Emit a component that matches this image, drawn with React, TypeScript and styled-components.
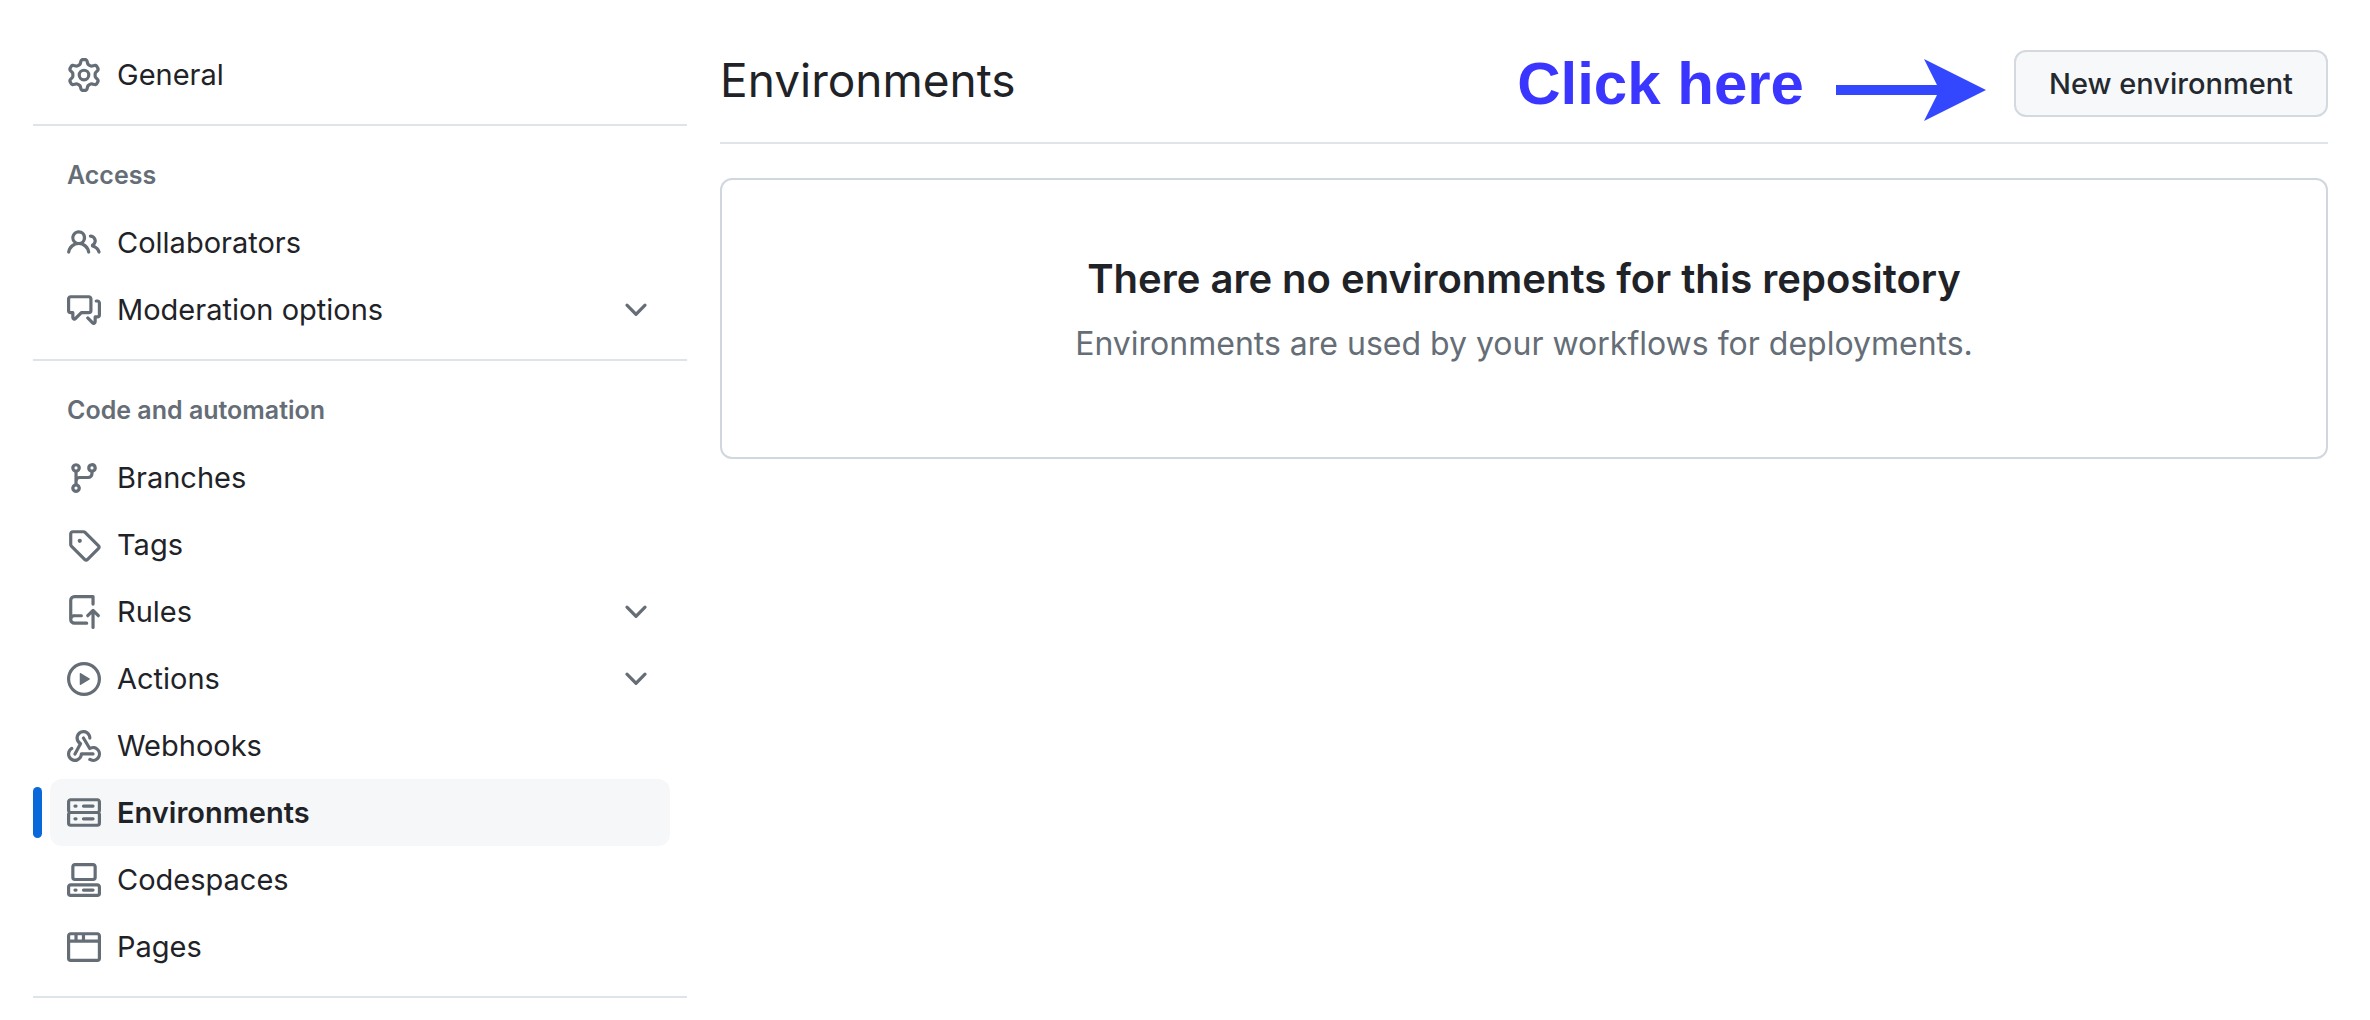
import React from "react";
import styled, { createGlobalStyle } from "styled-components";

const GlobalStyle = createGlobalStyle`
  *, *::before, *::after { box-sizing: border-box; }
  body {
    margin: 0;
    background: #ffffff;
    color: #1f2328;
    font-family: Inter, "Liberation Sans", sans-serif;
  }
`;

const paths = {
  gear: "M8 0a8.2 8.2 0 0 1 .701.031C9.444.095 9.99.645 10.16 1.29l.288 1.107c.018.066.079.158.212.224.231.114.454.243.668.386.123.082.233.09.299.071l1.103-.303c.644-.176 1.392.021 1.82.63.27.385.506.792.704 1.218.315.675.111 1.422-.364 1.891l-.814.806c-.049.048-.098.147-.088.294.016.257.016.515 0 .772-.01.147.038.246.088.294l.814.806c.475.469.679 1.216.364 1.891a7.977 7.977 0 0 1-.704 1.217c-.428.61-1.176.807-1.82.63l-1.102-.302c-.067-.019-.177-.011-.3.071a5.909 5.909 0 0 1-.668.386c-.133.066-.194.158-.211.224l-.29 1.106c-.168.646-.715 1.196-1.458 1.26a8.006 8.006 0 0 1-1.402 0c-.743-.064-1.289-.614-1.458-1.26l-.289-1.106c-.018-.066-.079-.158-.212-.224a5.738 5.738 0 0 1-.668-.386c-.123-.082-.233-.09-.299-.071l-1.103.303c-.644.176-1.392-.021-1.82-.63a8.12 8.12 0 0 1-.704-1.218c-.315-.675-.111-1.422.363-1.891l.815-.806c.05-.048.098-.147.088-.294a6.214 6.214 0 0 1 0-.772c.01-.147-.038-.246-.088-.294l-.815-.806C.635 6.045.431 5.298.746 4.623a7.92 7.92 0 0 1 .704-1.217c.428-.61 1.176-.807 1.82-.63l1.102.302c.067.019.177.011.3-.071.214-.143.437-.272.668-.386.133-.066.194-.158.211-.224l.29-1.106C6.009.645 6.556.095 7.299.03 7.53.01 7.764 0 8 0Zm-.571 1.525c-.036.003-.108.036-.137.146l-.289 1.105c-.147.561-.549.967-.998 1.189-.173.086-.34.183-.5.29-.417.278-.97.423-1.529.27l-1.103-.303c-.109-.03-.175.016-.195.045-.22.312-.412.644-.573.99-.014.031-.021.11.059.19l.815.806c.411.406.562.957.53 1.456a4.709 4.709 0 0 0 0 .582c.032.499-.119 1.05-.53 1.456l-.815.806c-.081.08-.073.159-.059.19.162.346.353.677.573.989.02.03.085.076.195.046l1.102-.303c.56-.153 1.113-.008 1.53.27.161.107.328.204.501.29.447.222.85.629.997 1.189l.289 1.105c.029.109.101.143.137.146a6.6 6.6 0 0 0 1.142 0c.036-.003.108-.036.137-.146l.289-1.105c.147-.561.549-.967.998-1.189.173-.086.34-.183.5-.29.417-.278.97-.423 1.529-.27l1.103.303c.109.029.175-.016.195-.045.22-.313.411-.644.573-.99.014-.031.021-.11-.059-.19l-.815-.806c-.411-.406-.562-.957-.53-1.456a4.709 4.709 0 0 0 0-.582c-.032-.499.119-1.05.53-1.456l.815-.806c.081-.08.073-.159.059-.19a6.464 6.464 0 0 0-.573-.989c-.02-.03-.085-.076-.195-.046l-1.102.303c-.56.153-1.113.008-1.53-.27a4.44 4.44 0 0 0-.501-.29c-.447-.222-.85-.629-.997-1.189l-.289-1.105c-.029-.11-.101-.143-.137-.146a6.6 6.6 0 0 0-1.142 0ZM11 8a3 3 0 1 1-6 0 3 3 0 0 1 6 0ZM9.5 8a1.5 1.5 0 1 0-3.001.001A1.5 1.5 0 0 0 9.5 8Z",
  people: "M2 5.5a3.5 3.5 0 1 1 5.898 2.549 5.508 5.508 0 0 1 3.034 4.084.75.75 0 1 1-1.482.235 4 4 0 0 0-7.9 0 .75.75 0 0 1-1.482-.236A5.507 5.507 0 0 1 3.102 8.05 3.493 3.493 0 0 1 2 5.5ZM11 4a3.001 3.001 0 0 1 2.22 5.018 5.01 5.01 0 0 1 2.56 3.012.749.749 0 0 1-.885.954.752.752 0 0 1-.549-.514 3.507 3.507 0 0 0-2.522-2.372.75.75 0 0 1-.574-.73v-.352a.75.75 0 0 1 .416-.672A1.5 1.5 0 0 0 11 5.5.75.75 0 0 1 11 4Zm-5.5-.5a2 2 0 1 0-.001 3.999A2 2 0 0 0 5.5 3.5Z",
  discussion: "M1.75 1h8.5c.966 0 1.75.784 1.75 1.75v5.5A1.75 1.75 0 0 1 10.25 10H7.061l-2.574 2.573A1.458 1.458 0 0 1 2 11.543V10h-.25A1.75 1.75 0 0 1 0 8.25v-5.5C0 1.784.784 1 1.75 1ZM1.5 2.75v5.5c0 .138.112.25.25.25h1a.75.75 0 0 1 .75.75v2.19l2.72-2.72a.749.749 0 0 1 .53-.22h3.5a.25.25 0 0 0 .25-.25v-5.5a.25.25 0 0 0-.25-.25h-8.5a.25.25 0 0 0-.25.25Zm13 2a.25.25 0 0 0-.25-.25h-.5a.75.75 0 0 1 0-1.5h.5c.966 0 1.75.784 1.75 1.75v5.5A1.75 1.75 0 0 1 14.25 12H14v1.543a1.458 1.458 0 0 1-2.487 1.03L9.22 12.28a.749.749 0 0 1 .326-1.275.749.749 0 0 1 .734.215l2.22 2.22v-2.19a.75.75 0 0 1 .75-.75h1a.25.25 0 0 0 .25-.25Z",
  branch: "M9.5 3.25a2.25 2.25 0 1 1 3 2.122V6A2.5 2.5 0 0 1 10 8.5H6a1 1 0 0 0-1 1v1.128a2.251 2.251 0 1 1-1.5 0V5.372a2.25 2.25 0 1 1 1.5 0v1.836A2.493 2.493 0 0 1 6 7h4a1 1 0 0 0 1-1v-.628A2.25 2.25 0 0 1 9.5 3.25Zm-6 0a.75.75 0 1 0 1.5 0 .75.75 0 0 0-1.5 0Zm8.25-.75a.75.75 0 1 0 0 1.5.75.75 0 0 0 0-1.5ZM4.25 12a.75.75 0 1 0 0 1.5.75.75 0 0 0 0-1.5Z",
  tag: "M1 7.775V2.75C1 1.784 1.784 1 2.75 1h5.025c.464 0 .91.184 1.238.513l6.25 6.25a1.75 1.75 0 0 1 0 2.474l-5.026 5.026a1.75 1.75 0 0 1-2.474 0l-6.25-6.25A1.752 1.752 0 0 1 1 7.775Zm1.5 0c0 .066.026.13.073.177l6.25 6.25a.25.25 0 0 0 .354 0l5.025-5.025a.25.25 0 0 0 0-.354l-6.25-6.25a.25.25 0 0 0-.177-.073H2.75a.25.25 0 0 0-.25.25ZM6 5a1 1 0 1 1 0 2 1 1 0 0 1 0-2Z",
  repoPush: "M1 2.5A2.5 2.5 0 0 1 3.5 0h8.75a.75.75 0 0 1 .75.75v3.5a.75.75 0 0 1-1.5 0V1.5h-8a1 1 0 0 0-1 1v6.708A2.493 2.493 0 0 1 3.5 9h3.25a.75.75 0 0 1 0 1.5H3.5a1 1 0 0 0 0 2h5.75a.75.75 0 0 1 0 1.5H3.5A2.5 2.5 0 0 1 1 11.5Zm13.23 7.79h-.001l-1.224-1.224v6.184a.75.75 0 0 1-1.5 0V9.066L10.28 10.29a.75.75 0 0 1-1.06-1.061l2.505-2.504a.75.75 0 0 1 1.06 0L15.29 9.23a.751.751 0 0 1-.018 1.042.751.751 0 0 1-1.042.018Z",
  play: "M8 0a8 8 0 1 1 0 16A8 8 0 0 1 8 0ZM1.5 8a6.5 6.5 0 1 0 13 0 6.5 6.5 0 0 0-13 0Zm4.879-2.773 4.264 2.559a.25.25 0 0 1 0 .428l-4.264 2.559A.25.25 0 0 1 6 10.559V5.442a.25.25 0 0 1 .379-.215Z",
  webhook: "M5.5 4.25a2.25 2.25 0 0 1 4.5 0 .75.75 0 0 0 1.5 0 3.75 3.75 0 1 0-6.14 2.889l-2.272 4.258a.75.75 0 0 0 1.324.706L7 7.25a.75.75 0 0 0-.309-1.015A2.25 2.25 0 0 1 5.5 4.25ZM7.364 3.607a.75.75 0 0 1 1.03.257l2.608 4.349a3.75 3.75 0 1 1-.628 6.785.75.75 0 0 1 .752-1.299 2.25 2.25 0 1 0-.033-3.88.75.75 0 0 1-1.03-.256L7.107 4.636a.75.75 0 0 1 .257-1.03ZM2.9 8.776A.75.75 0 0 1 2.625 9.8 2.25 2.25 0 1 0 6 11.75a.75.75 0 0 1 .75-.751h5.5a.75.75 0 0 1 0 1.5H7.425a3.751 3.751 0 1 1-5.55-3.998.75.75 0 0 1 1.024.274Z",
  server: "M1.75 1h12.5c.966 0 1.75.784 1.75 1.75v4c0 .372-.116.717-.314 1 .198.283.314.628.314 1v4a1.75 1.75 0 0 1-1.75 1.75H1.75A1.75 1.75 0 0 1 0 12.75v-4c0-.358.109-.707.314-1a1.739 1.739 0 0 1-.314-1v-4C0 1.784.784 1 1.75 1ZM1.5 2.75v4c0 .138.112.25.25.25h12.5a.25.25 0 0 0 .25-.25v-4a.25.25 0 0 0-.25-.25H1.75a.25.25 0 0 0-.25.25Zm.25 5.75a.25.25 0 0 0-.25.25v4c0 .138.112.25.25.25h12.5a.25.25 0 0 0 .25-.25v-4a.25.25 0 0 0-.25-.25ZM7 4.75A.75.75 0 0 1 7.75 4h4.5a.75.75 0 0 1 0 1.5h-4.5A.75.75 0 0 1 7 4.75ZM7.75 10h4.5a.75.75 0 0 1 0 1.5h-4.5a.75.75 0 0 1 0-1.5ZM3 4.75A.75.75 0 0 1 3.75 4h.5a.75.75 0 0 1 0 1.5h-.5A.75.75 0 0 1 3 4.75ZM3.75 10h.5a.75.75 0 0 1 0 1.5h-.5a.75.75 0 0 1 0-1.5Z",
  codespaces: "M0 11.25c0-.966.784-1.75 1.75-1.75h12.5c.966 0 1.75.784 1.75 1.75v3A1.75 1.75 0 0 1 14.25 16H1.75A1.75 1.75 0 0 1 0 14.25Zm2-9.5C2 .784 2.784 0 3.75 0h8.5C13.216 0 14 .784 14 1.75v5a1.75 1.75 0 0 1-1.75 1.75h-8.5A1.75 1.75 0 0 1 2 6.75Zm1.75-.25a.25.25 0 0 0-.25.25v5c0 .138.112.25.25.25h8.5a.25.25 0 0 0 .25-.25v-5a.25.25 0 0 0-.25-.25Zm-2 9.5a.25.25 0 0 0-.25.25v3c0 .138.112.25.25.25h12.5a.25.25 0 0 0 .25-.25v-3a.25.25 0 0 0-.25-.25ZM7 12.75a.75.75 0 0 1 .75-.75h4.5a.75.75 0 0 1 0 1.5h-4.5a.75.75 0 0 1-.75-.75Zm-4 0a.75.75 0 0 1 .75-.75h.5a.75.75 0 0 1 0 1.5h-.5a.75.75 0 0 1-.75-.75Z",
  browser: "M0 2.75C0 1.784.784 1 1.75 1h12.5c.966 0 1.75.784 1.75 1.75v10.5A1.75 1.75 0 0 1 14.25 15H1.75A1.75 1.75 0 0 1 0 13.25ZM14.5 6h-13v7.25c0 .138.112.25.25.25h12.5a.25.25 0 0 0 .25-.25Zm-6-3.5v2h6V2.75a.25.25 0 0 0-.25-.25ZM5 2.5v2h2v-2Zm-3.25 0a.25.25 0 0 0-.25.25V4.5h2v-2Z",
  chevronDown: "M12.78 5.22a.749.749 0 0 1 0 1.06l-4.25 4.25a.749.749 0 0 1-1.06 0L3.22 6.28a.749.749 0 1 1 1.06-1.06L8 8.939l3.72-3.719a.749.749 0 0 1 1.06 0Z",
};

type IconName = keyof typeof paths;

const IconSvg = styled.svg`
  flex: none;
  width: 34px;
  height: 34px;
  fill: #656d76;
`;

const Icon = ({ name }: { name: IconName }) => (
  <IconSvg viewBox="0 0 16 16" aria-hidden="true">
    <path d={paths[name]} />
  </IconSvg>
);

const Layout = styled.div`
  display: grid;
  grid-template-columns: 654px minmax(0, 1fr);
  column-gap: 33px;
  padding: 41px 42px 22px 33px;
`;

const Sidebar = styled.nav``;

const Section = styled.section`
  padding-bottom: 16px;
  margin-bottom: 16px;
  border-bottom: 2px solid #dfe4e9;
`;

const SectionTitle = styled.h2`
  margin: 0;
  padding: 0 34px;
  font-size: 25px;
  line-height: 67px;
  font-weight: 600;
  color: #656d76;
`;

const List = styled.ul`
  margin: 0;
  padding: 0;
  list-style: none;
`;

const Item = styled.li<{ $current?: boolean }>`
  position: relative;
  padding: 0 17px;

  ${(p) =>
    p.$current &&
    `&::before {
      content: "";
      position: absolute;
      left: 0;
      top: 8px;
      bottom: 8px;
      width: 9px;
      border-radius: 6px;
      background: #0969da;
    }`}
`;

const ItemLink = styled.a<{ $current?: boolean }>`
  display: flex;
  align-items: center;
  gap: 16px;
  height: 67px;
  padding: 0 17px;
  border-radius: 12px;
  color: inherit;
  text-decoration: none;
  font-size: 29px;
  font-weight: ${(p) => (p.$current ? 600 : 400)};
  background: ${(p) => (p.$current ? "#f6f7f9" : "transparent")};
`;

const Label = styled.span`
  flex: 1;
`;

const Main = styled.main``;

const Header = styled.header`
  display: flex;
  align-items: flex-start;
  justify-content: space-between;
  padding: 9px 0 25px;
  border-bottom: 2px solid #dfe4e9;
`;

const Title = styled.h1`
  margin: 0;
  font-size: 46px;
  line-height: 60px;
  font-weight: 400;
`;

const Actions = styled.div`
  display: flex;
  align-items: center;
  gap: 28px;
`;

const Callout = styled.div`
  display: flex;
  align-items: center;
  gap: 32px;
  font-family: "Liberation Sans", Arial, sans-serif;
  font-size: 60px;
  line-height: 67px;
  font-weight: 700;
  color: #3a36ff;
`;

const Arrow = styled.svg`
  width: 150px;
  height: 67px;
  overflow: visible;
  fill: #3347ff;
`;

const Button = styled.button`
  height: 67px;
  padding: 0 33px;
  border: 2px solid #d3d9df;
  border-radius: 12px;
  background: #f6f8fa;
  color: #24292f;
  font-family: inherit;
  font-size: 29px;
  font-weight: 500;
  cursor: pointer;
`;

const Blankslate = styled.section`
  margin-top: 34px;
  padding: 67px 67px 88px;
  border: 2px solid #d0d7de;
  border-radius: 12px;
  text-align: center;
`;

const BlankTitle = styled.h2`
  margin: 0 0 8px;
  font-size: 40px;
  line-height: 64px;
  font-weight: 600;
`;

const BlankText = styled.p`
  margin: 0;
  font-size: 32px;
  line-height: 50px;
  color: #656d76;
`;

interface NavItem {
  icon: IconName;
  label: string;
  expandable?: boolean;
  current?: boolean;
}

const sections: { title?: string; items: NavItem[] }[] = [
  { items: [{ icon: "gear", label: "General" }] },
  {
    title: "Access",
    items: [
      { icon: "people", label: "Collaborators" },
      { icon: "discussion", label: "Moderation options", expandable: true },
    ],
  },
  {
    title: "Code and automation",
    items: [
      { icon: "branch", label: "Branches" },
      { icon: "tag", label: "Tags" },
      { icon: "repoPush", label: "Rules", expandable: true },
      { icon: "play", label: "Actions", expandable: true },
      { icon: "webhook", label: "Webhooks" },
      { icon: "server", label: "Environments", current: true },
      { icon: "codespaces", label: "Codespaces" },
      { icon: "browser", label: "Pages" },
    ],
  },
];

export default function App() {
  return (
    <>
      <GlobalStyle />
      <Layout>
        <Sidebar>
          {sections.map((section) => (
            <Section key={section.title ?? "top"}>
              {section.title && <SectionTitle>{section.title}</SectionTitle>}
              <List>
                {section.items.map((item) => (
                  <Item key={item.label} $current={item.current}>
                    <ItemLink
                      href="#"
                      $current={item.current}
                      aria-current={item.current ? "page" : undefined}
                    >
                      <Icon name={item.icon} />
                      <Label>{item.label}</Label>
                      {item.expandable && <Icon name="chevronDown" />}
                    </ItemLink>
                  </Item>
                ))}
              </List>
            </Section>
          ))}
        </Sidebar>
        <Main>
          <Header>
            <Title>Environments</Title>
            <Actions>
              <Callout>
                Click here
                <Arrow viewBox="0 0 150 67" aria-hidden="true">
                  <path d="M0 35H101L88 9L150 40L88 71L101 45H0Z" />
                </Arrow>
              </Callout>
              <Button type="button">New environment</Button>
            </Actions>
          </Header>
          <Blankslate>
            <BlankTitle>There are no environments for this repository</BlankTitle>
            <BlankText>Environments are used by your workflows for deployments.</BlankText>
          </Blankslate>
        </Main>
      </Layout>
    </>
  );
}
